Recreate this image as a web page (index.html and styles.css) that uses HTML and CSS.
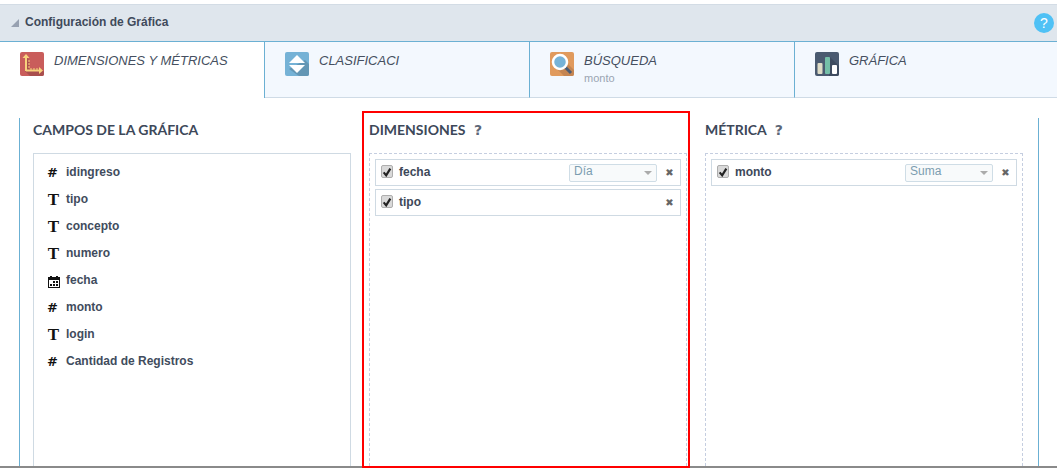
FILE: index.html
```html
<!DOCTYPE html>
<html lang="es">
<head>
<meta charset="utf-8">
<title>Configuración de Gráfica</title>
<link rel="stylesheet" href="styles.css">
</head>
<body>
<header class="bar">
  <span class="bar-arrow"></span>
  <h1 class="bar-title">Configuración de Gráfica</h1>
  <span class="help">?</span>
</header>
<nav class="tabs">
  <div class="tab tab-active">
    <svg class="tab-icon" viewBox="0 0 24 24"><rect width="24" height="24" rx="2" fill="#c95d5b"/><path d="M5 3v16l5 5h12a2 2 0 0 0 2-2v-2l-2-3H9V8z" fill="#a94f4e"/><path d="M6 19V5M6 18.500h15" stroke="#f8d27c" stroke-width="2" fill="none"/><path d="M2.500 6 6 2l3.500 4zM19 15l4 3.500-4 3.500z" fill="#f8d27c"/><path d="M8 9h2M8 12h2M8 15h2M11 16v2M14 16v2M17 16v2" stroke="#f8d27c" stroke-width="1"/></svg>
    <div class="tab-text"><span class="tab-label">DIMENSIONES Y MÉTRICAS</span></div>
  </div>
  <div class="tab">
    <svg class="tab-icon" viewBox="0 0 24 24"><rect width="24" height="24" rx="2" fill="#75b2d6"/><path d="M20 8 24 12v10a2 2 0 0 1-2 2H14l-10-7z" fill="#6396b4"/><path d="M12 3l8 8H4zM4 13h16l-8 8z" fill="#fff"/></svg>
    <div class="tab-text"><span class="tab-label">CLASIFICACI</span></div>
  </div>
  <div class="tab">
    <svg class="tab-icon" viewBox="0 0 24 24"><rect width="24" height="24" rx="2" fill="#e09a5d"/><path d="M5 15l9 9h8a2 2 0 0 0 2-2v-4L18 12z" fill="#c48552"/><path d="M15 15l6 6" stroke="#4a5b73" stroke-width="3"/><circle cx="10" cy="10" r="7" fill="#76b3d8" stroke="#fff" stroke-width="2.500"/></svg>
    <div class="tab-text"><span class="tab-label">BÚSQUEDA</span><span class="tab-sub">monto</span></div>
  </div>
  <div class="tab">
    <svg class="tab-icon" viewBox="0 0 24 24"><rect width="24" height="24" rx="2" fill="#4a5a70"/><path d="M15 5l9 9v8a2 2 0 0 1-2 2H14z" fill="#3e4c60"/><rect x="2.500" y="11" width="5" height="11" rx="1" fill="#dedcc6"/><rect x="10" y="5" width="5" height="17" rx="1" fill="#74bfa8"/><rect x="17" y="13" width="5" height="9" rx="1" fill="#fff"/></svg>
    <div class="tab-text"><span class="tab-label">GRÁFICA</span></div>
  </div>
</nav>
<main class="content">
  <div class="panel">
    <section class="col">
      <h2 class="col-title">CAMPOS DE LA GRÁFICA</h2>
      <ul class="fields">
        <li class="field"><span class="ficon ficon-num">#</span>idingreso</li>
        <li class="field"><span class="ficon ficon-text">T</span>tipo</li>
        <li class="field"><span class="ficon ficon-text">T</span>concepto</li>
        <li class="field"><span class="ficon ficon-text">T</span>numero</li>
        <li class="field"><span class="ficon"><svg class="cal" viewBox="0 0 12 12"><path d="M0 1h2V0h2v1h4V0h2v1h2v11H0z" fill="#111"/><path d="M1 4h10v7H1z" fill="#fff"/><path d="M2 8h2v2H2zM5 8h2v2H5zM8 8h2v2H8zM5 5h2v2H5zM8 5h2v2H8z" fill="#111"/></svg></span>fecha</li>
        <li class="field"><span class="ficon ficon-num">#</span>monto</li>
        <li class="field"><span class="ficon ficon-text">T</span>login</li>
        <li class="field"><span class="ficon ficon-num">#</span>Cantidad de Registros</li>
      </ul>
    </section>
    <section class="col col-marked">
      <h2 class="col-title">DIMENSIONES <span class="q">?</span></h2>
      <div class="drop">
        <div class="item">
          <span class="check"><svg viewBox="0 0 12 12"><path d="M2 6.500 5 10l5-8" fill="none" stroke="#222" stroke-width="2.600"/></svg></span>
          <span class="item-name">fecha</span>
          <span class="sel">Día</span>
          <span class="rm">✖</span>
        </div>
        <div class="item">
          <span class="check"><svg viewBox="0 0 12 12"><path d="M2 6.500 5 10l5-8" fill="none" stroke="#222" stroke-width="2.600"/></svg></span>
          <span class="item-name">tipo</span>
          <span class="rm">✖</span>
        </div>
      </div>
      <div class="marker"></div>
    </section>
    <section class="col">
      <h2 class="col-title">MÉTRICA <span class="q">?</span></h2>
      <div class="drop">
        <div class="item">
          <span class="check"><svg viewBox="0 0 12 12"><path d="M2 6.500 5 10l5-8" fill="none" stroke="#222" stroke-width="2.600"/></svg></span>
          <span class="item-name">monto</span>
          <span class="sel">Suma</span>
          <span class="rm">✖</span>
        </div>
      </div>
    </section>
  </div>
</main>
<div class="foot"></div>
</body>
</html>
```
FILE: styles.css
```css
* { box-sizing: border-box; }
html, body { margin: 0; padding: 0; }
body {
  width: 1057px;
  height: 468px;
  overflow: hidden;
  display: flex;
  flex-direction: column;
  background: #fff;
  color: #3d4859;
  font-family: "Liberation Sans", Arial, sans-serif;
}
.bar {
  margin-top: 4px;
  height: 38px;
  flex: none;
  display: flex;
  align-items: center;
  padding: 0 3px 1px 11px;
  background: #dfe6ed;
  border-top: 1px solid #d3dce5;
  border-bottom: 1px solid #6bb0d3;
}
.bar-arrow {
  width: 0;
  height: 0;
  border-style: solid;
  border-width: 0 0 8px 8px;
  border-color: transparent transparent #97a1b1 transparent;
  margin-right: 6px;
}
.bar-title {
  flex: 1;
  margin: -2px 0 0;
  font-size: 12px;
  font-weight: 700;
  color: #3f4a5b;
}
.help {
  width: 20px;
  height: 20px;
  border-radius: 50%;
  background: #4fc1f5;
  color: #fff;
  font-family: "Liberation Sans", sans-serif;
  font-size: 14px;
  line-height: 20px;
  text-align: center;
}
.tabs {
  flex: none;
  height: 56px;
  display: grid;
  grid-template-columns: 265px 265px 265px 262px;
  background: #f3f8fe;
}
.tab {
  display: flex;
  gap: 10px;
  padding: 10px 0 0 20px;
  border-right: 1px solid #6bb0d3;
  border-bottom: 1px solid #cfdbe6;
}
.tab:last-child { border-right: 0; }
.tab-active { background: #fff; border-bottom: 0; }
.tab-icon { width: 24px; height: 24px; flex: none; }
.tab-text { display: flex; flex-direction: column; }
.tab-label {
  font-size: 13px;
  line-height: 17px;
  font-style: italic;
  color: #454f60;
}
.tab-sub {
  margin-top: 1px;
  font-size: 11px;
  line-height: 16px;
  color: #9aa4b2;
}
.content {
  flex: 1;
  min-height: 0;
  padding: 20px 18px 0 19px;
}
.panel {
  height: 100%;
  display: grid;
  grid-template-columns: 318px 318px 318px;
  gap: 18px;
  padding-left: 13px;
  border-left: 1px solid #6bb0d3;
  border-right: 1px solid #6bb0d3;
}
.col { position: relative; display: flex; flex-direction: column; min-height: 0; }
.col-title {
  flex: none;
  height: 35px;
  margin: 0;
  padding-top: 3px;
  font-family: Lato, sans-serif;
  font-size: 14px;
  line-height: 18px;
  font-weight: 700;
  color: #3d4859;
}
.q {
  margin-left: 5px;
  font-family: "DejaVu Sans", sans-serif;
  font-size: 14px;
  color: #5d6778;
}
.fields {
  flex: 1;
  margin: 0;
  padding: 4px 0 0;
  list-style: none;
  border: 1px solid #cfdae3;
  border-bottom: 0;
}
.field {
  display: flex;
  align-items: center;
  height: 27px;
  font-size: 12px;
  font-weight: 700;
  color: #414c5d;
}
.ficon {
  width: 32px;
  flex: none;
  display: flex;
  justify-content: flex-end;
  padding-right: 6px;
  color: #111;
}
.ficon-text { font-family: "Liberation Serif", serif; font-size: 17px; padding-right: 7px; padding-top: 3px; }
.ficon-num { font-family: "DejaVu Sans", sans-serif; font-size: 13px; padding-right: 8px; padding-top: 2px; }
.cal { width: 12px; height: 12px; display: block; margin-top: 4px; }
.drop {
  flex: 1;
  padding: 5px 5px 0;
  border: 1px dashed #c5cee0;
  border-bottom: 0;
}
.item {
  height: 27px;
  margin-bottom: 3px;
  display: flex;
  align-items: center;
  padding: 0 0 2px 5px;
  background: #fff;
  border: 1px solid #cfdae3;
}
.check {
  width: 12px;
  height: 13px;
  flex: none;
  margin: 0 6px 0 0;
  background: #d9d9d9;
  border: 1px solid #aeaeae;
  border-radius: 2px;
  display: flex;
  align-items: center;
}
.check svg { width: 10px; height: 10px; }
.item-name {
  flex: 1;
  font-size: 12px;
  font-weight: 700;
  color: #3d4859;
}
.sel {
  position: relative;
  width: 88px;
  height: 18px;
  margin-top: 2px;
  padding-left: 4px;
  font-size: 12px;
  line-height: 13px;
  color: #7c9db0;
  background: #f8fafb;
  border: 1px solid #cfdde6;
  border-radius: 2px;
}
.sel::after {
  content: "";
  position: absolute;
  right: 4px;
  top: 6px;
  border-style: solid;
  border-width: 4px 4px 0;
  border-color: #ababab transparent transparent;
}
.rm {
  width: 23px;
  flex: none;
  padding: 2px 0 0 2px;
  text-align: center;
  font-family: "DejaVu Sans", sans-serif;
  font-size: 10px;
  color: #666;
}
.marker {
  position: absolute;
  top: -7px;
  left: -7px;
  right: -3px;
  bottom: -2px;
  border: 2px solid #f00;
  pointer-events: none;
}
.foot {
  flex: none;
  height: 2px;
  background: #8a8a8a;
}
```
